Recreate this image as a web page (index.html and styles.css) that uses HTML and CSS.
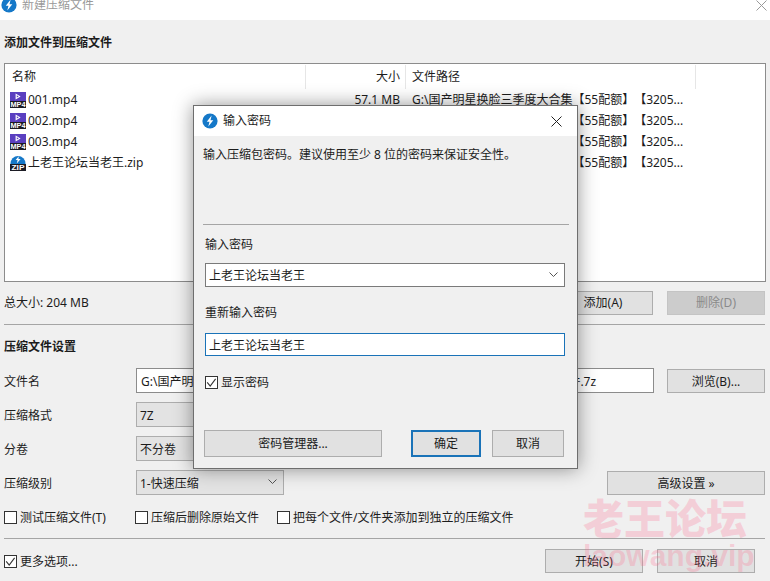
FILE: index.html
```html
<!DOCTYPE html>
<html lang="zh">
<head>
<meta charset="utf-8">
<title>新建压缩文件</title>
<link rel="stylesheet" href="styles.css">
</head>
<body>
<svg class="defs" width="0" height="0" aria-hidden="true">
  <symbol id="logo" viewBox="0 0 16 16">
    <circle cx="8" cy="8" r="7.6" fill="#1578c8"/>
    <path d="M9.6 2.6 4.8 8.7h2.7L6.3 13.4l5-6.2H8.5z" fill="#fff"/>
  </symbol>
  <symbol id="mp4" viewBox="0 0 16 16">
    <rect x="0" y="0" width="16" height="9" fill="#5a3fc0"/>
    <path d="M5.6 1.4 10.6 4.4 5.6 7.4zM6.8 3.3v2.2l1.9-1.1z" fill="#fff" fill-rule="evenodd"/>
    <rect x="0" y="9" width="16" height="7" fill="#1c1c24"/>
    <text x="8" y="15" text-anchor="middle" class="ico-txt" textLength="15" lengthAdjust="spacingAndGlyphs">MP4</text>
  </symbol>
  <symbol id="zip" viewBox="0 0 16 16">
    <path d="M0.4 9A7.6 8 0 0 1 15.6 9z" fill="#1578c8"/>
    <path d="M8.8 1.2 5.6 5h2L6.8 8.6 10.6 4H8.4z" fill="#fff"/>
    <rect x="0" y="9" width="16" height="7" fill="#1c1c24"/>
    <text x="8" y="15" text-anchor="middle" class="ico-txt" textLength="13" lengthAdjust="spacingAndGlyphs">ZIP</text>
  </symbol>
</svg>

<div class="window">
  <header class="titlebar">
    <div class="titlebar-inner">
      <svg class="logo"><use href="#logo"/></svg>
      <span class="title-muted">新建压缩文件</span>
      <svg class="close close-muted" viewBox="0 0 11 11"><path d="M.5.5l10 10M10.5.5l-10 10"/></svg>
    </div>
  </header>

  <main class="content">
    <h2 class="heading heading-first">添加文件到压缩文件</h2>

    <section class="list">
      <div class="list-row list-head">
        <div class="c-name head-cell">名称</div>
        <div class="c-size head-cell">大小</div>
        <div class="c-path head-cell">文件路径</div>
      </div>
      <div class="list-row">
        <div class="c-name"><svg class="ficon"><use href="#mp4"/></svg>001.mp4</div>
        <div class="c-size">57.1 MB</div>
        <div class="c-path">G:\国产明星换脸三季度大合集【55配额】【3205...</div>
      </div>
      <div class="list-row">
        <div class="c-name"><svg class="ficon"><use href="#mp4"/></svg>002.mp4</div>
        <div class="c-size">57.1 MB</div>
        <div class="c-path">G:\国产明星换脸三季度大合集【55配额】【3205...</div>
      </div>
      <div class="list-row">
        <div class="c-name"><svg class="ficon"><use href="#mp4"/></svg>003.mp4</div>
        <div class="c-size">57.1 MB</div>
        <div class="c-path">G:\国产明星换脸三季度大合集【55配额】【3205...</div>
      </div>
      <div class="list-row">
        <div class="c-name"><svg class="ficon"><use href="#zip"/></svg>上老王论坛当老王.zip</div>
        <div class="c-size">32.6 MB</div>
        <div class="c-path">G:\国产明星换脸三季度大合集【55配额】【3205...</div>
      </div>
    </section>

    <div class="total-row">
      <span class="total">总大小: 204 MB</span>
      <button class="btn btn-add">添加(A)</button>
      <button class="btn btn-side btn-disabled">删除(D)</button>
    </div>

    <hr class="sep sep-total">

    <h2 class="heading heading-second">压缩文件设置</h2>

    <div class="form">
      <label class="form-label">文件名</label>
      <div class="form-line">
        <div class="field field-name">G:\国产明星换脸三季度大合集【55配额】【3205张】\三季度大合集_新建压缩文件.7z</div>
        <button class="btn btn-side">浏览(B)...</button>
      </div>
      <label class="form-label">压缩格式</label>
      <div class="form-line"><div class="field field-select">7Z</div></div>
      <label class="form-label">分卷</label>
      <div class="form-line"><div class="field field-select">不分卷</div></div>
      <label class="form-label">压缩级别</label>
      <div class="form-line">
        <div class="field field-select">1-快速压缩
          <svg class="chev" viewBox="0 0 9 5"><path d="M.5.5l4 4 4-4"/></svg>
        </div>
        <button class="btn btn-adv">高级设置 »</button>
      </div>
    </div>

    <div class="options">
      <label class="check opt-a"><span class="box"></span>测试压缩文件(T)</label>
      <label class="check opt-b"><span class="box"></span>压缩后删除原始文件</label>
      <label class="check"><span class="box"></span>把每个文件/文件夹添加到独立的压缩文件</label>
    </div>

    <hr class="sep sep-bottom">

    <div class="footer">
      <label class="check"><span class="box"><svg viewBox="0 0 11 11"><path d="M1.2 5.4l3 3.6 5.4-7.2"/></svg></span>更多选项...</label>
      <div class="footer-btns">
        <button class="btn btn-side">开始(S)</button>
        <button class="btn btn-side">取消</button>
      </div>
    </div>
  </main>

  <div class="dialog">
    <div class="dlg-title">
      <svg class="logo"><use href="#logo"/></svg>
      <span>输入密码</span>
      <svg class="close" viewBox="0 0 11 11"><path d="M.5.5l10 10M10.5.5l-10 10"/></svg>
    </div>
    <div class="dlg-body">
      <p class="dlg-desc">输入压缩包密码。建议使用至少 8 位的密码来保证安全性。</p>
      <hr class="sep dlg-sep">
      <div class="dlg-label dlg-label-1">输入密码</div>
      <div class="dlg-input dlg-combo">上老王论坛当老王
        <svg class="chev" viewBox="0 0 9 5"><path d="M.5.5l4 4 4-4"/></svg>
      </div>
      <div class="dlg-label dlg-label-2">重新输入密码</div>
      <div class="dlg-input dlg-focus">上老王论坛当老王</div>
      <label class="check dlg-check"><span class="box"><svg viewBox="0 0 11 11"><path d="M1.2 5.4l3 3.6 5.4-7.2"/></svg></span>显示密码</label>
      <div class="dlg-btns">
        <button class="btn dlg-mgr">密码管理器...</button>
        <button class="btn dlg-ok">确定</button>
        <button class="btn dlg-cancel">取消</button>
      </div>
    </div>
  </div>

  <div class="watermark">
    <div class="wm-cn">老王论坛</div>
    <div class="wm-en">laowang.vip</div>
  </div>
</div>
</body>
</html>
```

FILE: styles.css
```css
* { box-sizing: border-box; }

html, body {
  margin: 0;
  padding: 0;
  width: 770px;
  height: 581px;
  overflow: hidden;
}

body {
  font: 12px/16px "Noto Sans", "Noto Sans CJK SC", sans-serif;
  color: #1c1c1c;
  background: #f0f0f0;
  text-spacing-trim: space-all;
}

.defs { position: absolute; }

.ico-txt {
  font: 700 6.5px "Liberation Sans", sans-serif;
  fill: #fff;
}

.window {
  position: relative;
  width: 770px;
  height: 581px;
  overflow: hidden;
}

/* main title bar, cut off by the top of the picture */
.titlebar {
  height: 20px;
  background: #fff;
  overflow: hidden;
}

.titlebar-inner {
  display: flex;
  align-items: center;
  height: 22px;
  margin-top: -6px;
  padding-left: 1px;
}

.logo {
  width: 16px;
  height: 16px;
  flex: none;
}

.title-muted {
  margin-left: 5px;
  color: #999;
}

.close {
  width: 11px;
  height: 11px;
  margin-left: auto;
  fill: none;
  stroke: #222;
  stroke-width: 1;
}

.close-muted {
  stroke: #999;
  margin-right: 3px;
}

.content { padding: 0 4px; }

.heading {
  display: flex;
  align-items: center;
  margin: 0;
  font-size: 12px;
  font-weight: 700;
}

.heading-first { height: 43px; padding-top: 2px; }
.heading-second { height: 43px; }

/* file list */
.list {
  width: 762px;
  height: 219px;
  background: #fff;
  border: 1px solid #8c8c8c;
}

.list-row {
  display: flex;
  align-items: center;
  height: 21px;
  padding-top: 1px;
  white-space: nowrap;
}

.list-head {
  height: 25px;
  padding-top: 1px;
  align-items: stretch;
}

.c-name {
  display: flex;
  align-items: center;
  width: 301px;
  padding-left: 5px;
}

.c-size {
  width: 100px;
  padding-right: 6px;
  text-align: right;
}

.c-path {
  width: 290px;
  padding-left: 6px;
}

.head-cell {
  display: block;
  line-height: 23px;
  border-right: 1px solid #e6e6e6;
}

.head-cell.c-name { padding-left: 7px; }
.head-cell.c-size { padding-right: 5px; }

.ficon {
  width: 16px;
  height: 16px;
  margin-right: 2px;
  flex: none;
}

/* buttons */
.btn {
  display: block;
  height: 24px;
  padding: 0;
  font: inherit;
  color: inherit;
  background: #e1e1e1;
  border: 1px solid #adadad;
  border-radius: 0;
}

.btn-side { width: 98px; }

.form .btn, .footer .btn { padding-top: 2px; }

.btn-add {
  width: 100px;
  margin-left: auto;
  margin-right: 14px;
}

.btn-disabled {
  color: #8a8a8a;
  background: #cccccc;
  border-color: #c4c4c4;
}

.btn-adv {
  width: 158px;
  margin-left: auto;
}

.total-row {
  display: flex;
  align-items: center;
  width: 761px;
  margin-top: 9px;
}

.sep {
  display: block;
  height: 1px;
  margin: 0;
  background: #a5a5a5;
  border: 0;
}

.sep-total { width: 761px; margin-top: 9px; }

/* settings */
.form {
  display: grid;
  grid-template-columns: 132px 629px;
  grid-auto-rows: 25px;
  row-gap: 9px;
}

.form-label {
  display: flex;
  align-items: center;
  padding-top: 2px;
}

.form-line {
  display: flex;
  align-items: center;
  justify-content: space-between;
}

.field {
  display: flex;
  align-items: center;
  height: 25px;
  padding: 2px 0 0 3px;
  white-space: nowrap;
  border: 1px solid #a0a0a0;
}

.field-name {
  width: 518px;
  padding-left: 4px;
  background: #fff;
  border-color: #8c8c8c;
  overflow: hidden;
}

.field-select {
  position: relative;
  width: 148px;
  background: #e3e3e3;
  border-color: #adadad;
}

.chev {
  position: absolute;
  right: 6px;
  top: 8px;
  width: 9px;
  height: 5px;
  fill: none;
  stroke: #555;
  stroke-width: 1;
}

/* checkboxes */
.options {
  display: flex;
  align-items: center;
  height: 14px;
  margin-top: 15px;
}

.check {
  display: flex;
  align-items: center;
  padding-top: 2px;
  white-space: nowrap;
}

.box {
  display: block;
  flex: none;
  width: 13px;
  height: 13px;
  margin: -2px 3px 0 0;
  background: #fff;
  border: 1px solid #333;
}

.box svg {
  display: block;
  width: 11px;
  height: 11px;
  fill: none;
  stroke: #333;
  stroke-width: 1.1;
}

.opt-a { width: 131px; }
.opt-b { width: 142px; }

.sep-bottom { width: 761px; margin-top: 14px; }

.footer {
  display: flex;
  align-items: center;
  justify-content: space-between;
  width: 751px;
  margin-top: 10px;
}

.footer-btns {
  display: flex;
  gap: 14px;
}

/* password dialog, floating over the main window */
.dialog {
  position: absolute;
  left: 193px;
  top: 105px;
  width: 385px;
  height: 364px;
  background: #f0f0f0;
  border: 1px solid #6e6e6e;
  box-shadow: 0 0 18px rgba(0, 0, 0, .42);
}

.dlg-title {
  display: flex;
  align-items: center;
  height: 30px;
  padding: 0 15px 0 8px;
  background: #fff;
}

.dlg-title span { margin-left: 5px; }

.dlg-body { padding-left: 11px; }

.dlg-desc {
  height: 38px;
  margin: 0 0 0 -2px;
  line-height: 38px;
}

.dlg-sep {
  width: 366px;
  margin: 50px 0 0 -2px;
}

.dlg-label {
  height: 20px;
  padding-top: 1px;
  line-height: 20px;
}

.dlg-label-1 { margin-top: 9px; margin-bottom: 9px; }
.dlg-label-2 { margin-top: 15px; margin-bottom: 11px; }

.dlg-input {
  position: relative;
  width: 360px;
  padding-left: 3px;
  background: #fff;
  border: 1px solid #7a7a7a;
}

.dlg-combo {
  height: 24px;
  line-height: 24px;
}

.dlg-focus {
  height: 23px;
  line-height: 23px;
  border-color: #1a73b8;
}

.dlg-check {
  height: 14px;
  margin-top: 19px;
}

.dlg-btns {
  display: flex;
  height: 27px;
  margin: 41px 0 0 -1px;
}

.dlg-btns .btn { height: 27px; }

.dlg-mgr { width: 178px; }

.dlg-ok {
  width: 70px;
  margin-left: 29px;
  border: 2px solid #1a73b8;
}

.dlg-cancel {
  width: 72px;
  margin-left: 11px;
}

/* site watermark stamped over the picture */
.watermark {
  position: absolute;
  left: 583px;
  top: 492px;
  width: 170px;
  color: rgba(255, 105, 140, .25);
  pointer-events: none;
}

.wm-cn {
  font: 900 41px/48px "Noto Sans CJK SC", sans-serif;
  white-space: nowrap;
}

.wm-en {
  font: 700 30px/32px "Liberation Sans", sans-serif;
  white-space: nowrap;
}
```
